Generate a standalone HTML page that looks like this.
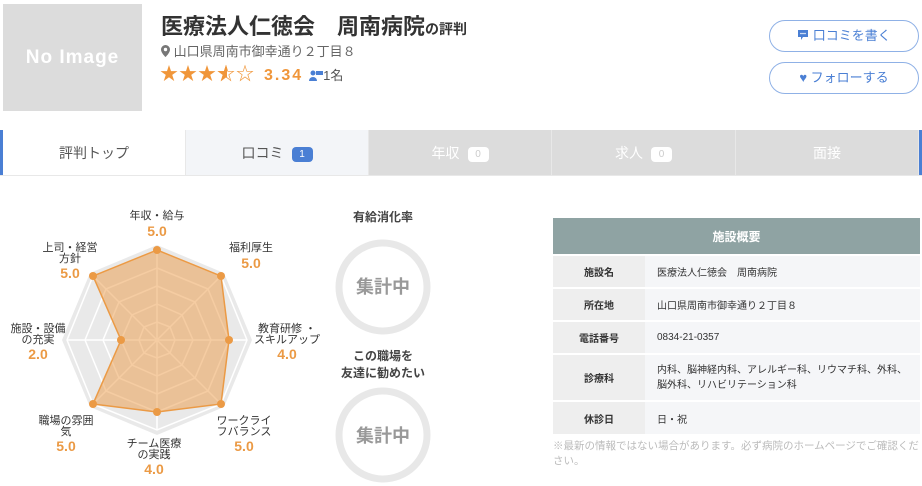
<!DOCTYPE html>
<html><head><meta charset="utf-8"><style>
*{margin:0;padding:0;box-sizing:border-box}
body{width:922px;height:486px;overflow:hidden;background:#fff;font-family:"Liberation Sans","Noto Sans CJK JP",sans-serif;color:#333;position:relative}
.a{position:absolute}
.noimg{left:3px;top:4px;width:139px;height:107px;background:#dcdcdc;color:#fff;font-size:19px;font-weight:bold;text-align:center;line-height:107px;letter-spacing:1px}
h1{position:absolute;left:161px;top:9px;font-size:22px;font-weight:bold;color:#333;white-space:nowrap}
h1 small{font-size:14px}
.btn{left:769px;width:150px;height:32px;border:1px solid #8fb1e6;border-radius:16px;color:#4a7fd4;font-size:13px;text-align:center;line-height:30px}
.tab{top:130px;height:46px;line-height:46px;text-align:center;font-size:14px;color:#fff;background:#dcdcdc;border-right:1px solid #e8e8e8}
.badge{display:inline-block;background:#fff;color:#ccc;border-radius:4px;font-size:10px;width:21px;height:15px;line-height:15px;margin-left:8px;vertical-align:1px}
.lbl{font-size:11px;color:#333;text-align:center;line-height:11px}
.val{font-size:14px;font-weight:bold;color:#eb9a45;text-align:center}
table{position:absolute;left:553px;top:218px;width:367px;border-collapse:collapse;font-size:10px}
th{background:#8fa3a3;color:#fff;height:37px;font-size:12px}
td{border-top:2px solid #fff;padding:0 12px;background:#f5f6f8}
td.k{background:#eeeeee;width:92px;text-align:center;font-weight:bold;padding:0}
</style></head><body>
<div class="a noimg">No Image</div>
<h1>医療法人仁徳会　周南病院<small>の評判</small></h1>
<div class="a" style="left:161px;top:41px;font-size:13px;color:#666"><svg width="9" height="12" viewBox="0 0 9 12" style="vertical-align:-1px"><path d="M4.5 0A4.5 4.5 0 0 0 0 4.5C0 8 4.5 12 4.5 12S9 8 9 4.5A4.5 4.5 0 0 0 4.5 0z" fill="#777"/><circle cx="4.5" cy="4.5" r="1.7" fill="#fff"/></svg> 山口県周南市御幸通り２丁目８</div>
<div class="a" style="left:160px;top:60px;font-size:18px;color:#f0963a;letter-spacing:1px;white-space:nowrap">★★★<span style="position:relative;display:inline-block"><span style="position:absolute;left:0;top:0;width:50%;overflow:hidden">★</span>☆</span>☆ <b style="font-size:16px;letter-spacing:2px;margin-left:3px">3.34</b> <span style="font-size:13px;color:#555;letter-spacing:0"><svg width="14" height="11" viewBox="0 0 14 11" style="vertical-align:-1px"><circle cx="4" cy="3" r="2.5" fill="#4a7fd4"/><path d="M0 11a4 4 0 0 1 8 0z" fill="#4a7fd4"/><rect x="7" y="1" width="7" height="4" fill="#4a7fd4"/></svg>1名</span></div>
<div class="a btn" style="top:20px"><svg width="12" height="12" viewBox="0 0 12 12" style="vertical-align:-1px"><path d="M1 1h10v7H6l-2 3V8H1z" fill="#4a7fd4"/><g fill="#fff"><circle cx="4" cy="4.5" r=".8"/><circle cx="6" cy="4.5" r=".8"/><circle cx="8" cy="4.5" r=".8"/></g></svg> 口コミを書く</div>
<div class="a btn" style="top:62px"><span style="color:#4a7fd4">♥</span> フォローする</div>

<div class="a" style="left:0;top:130px;width:922px;height:1px;background:#e8e8e8"></div>
<div class="a tab" style="left:0;width:186px;background:#fff;color:#555;border-left:3px solid #4a7fd4;border-right:1px solid #e8e8e8">評判トップ</div>
<div class="a tab" style="left:186px;width:183px;background:#f3f5f8;color:#555">口コミ<span class="badge" style="background:#4a7fd4;color:#fff">1</span></div>
<div class="a tab" style="left:369px;width:183px">年収<span class="badge">0</span></div>
<div class="a tab" style="left:552px;width:184px">求人<span class="badge">0</span></div>
<div class="a tab" style="left:736px;width:183px">面接</div>
<div class="a" style="left:919px;top:130px;width:3px;height:46px;background:#4a7fd4"></div>
<div class="a" style="left:0;top:175px;width:922px;height:1px;background:#e8e8e8"></div>

<svg class="a" style="left:0;top:0" width="540" height="486">
<g transform="translate(157,340)">
<polygon points="0,-95 67,-67 95,0 67,67 0,95 -67,67 -95,0 -67,-67" fill="#e9e9e9"/>
<g fill="none" stroke="#fff" stroke-width="1.5">
<polygon points="0,-90 64,-64 90,0 64,64 0,90 -64,64 -90,0 -64,-64"/>
<polygon points="0,-72 51,-51 72,0 51,51 0,72 -51,51 -72,0 -51,-51"/>
<polygon points="0,-54 38,-38 54,0 38,38 0,54 -38,38 -54,0 -38,-38"/>
<polygon points="0,-36 25,-25 36,0 25,25 0,36 -25,25 -36,0 -25,-25"/>
<polygon points="0,-18 13,-13 18,0 13,13 0,18 -13,13 -18,0 -13,-13"/>
<path d="M0-90V90M-90 0H90M-64-64L64 64M64-64L-64 64"/>
</g>
<polygon points="0,-90 64,-64 72,0 64,64 0,72 -64,64 -36,0 -64,-64" fill="rgba(235,154,69,0.5)" stroke="#eb9a45" stroke-width="1.5"/>
<g fill="#eb9a45"><circle cx="0" cy="-90" r="4"/><circle cx="64" cy="-64" r="4"/><circle cx="72" cy="0" r="4"/><circle cx="64" cy="64" r="4"/><circle cx="0" cy="72" r="4"/><circle cx="-64" cy="64" r="4"/><circle cx="-36" cy="0" r="4"/><circle cx="-64" cy="-64" r="4"/></g>
</g>
<circle cx="383" cy="287" r="44" fill="none" stroke="#e8e8e8" stroke-width="7"/>
<circle cx="383" cy="435" r="44" fill="none" stroke="#e8e8e8" stroke-width="7"/>
</svg>
<div class="a lbl" style="left:117px;top:211px;width:80px">年収・給与</div>
<div class="a val" style="left:117px;top:223px;width:80px">5.0</div>
<div class="a lbl" style="left:211px;top:243px;width:80px">福利厚生</div>
<div class="a val" style="left:211px;top:255px;width:80px">5.0</div>
<div class="a lbl" style="left:30px;top:243px;width:80px">上司・経営<br>方針</div>
<div class="a val" style="left:30px;top:265px;width:80px">5.0</div>
<div class="a lbl" style="left:0;top:324px;width:76px">施設・設備<br>の充実</div>
<div class="a val" style="left:0;top:346px;width:76px">2.0</div>
<div class="a lbl" style="left:246px;top:324px;width:82px">教育研修 ・<br>スキルアップ</div>
<div class="a val" style="left:246px;top:346px;width:82px">4.0</div>
<div class="a lbl" style="left:26px;top:416px;width:80px">職場の雰囲<br>気</div>
<div class="a val" style="left:26px;top:438px;width:80px">5.0</div>
<div class="a lbl" style="left:204px;top:416px;width:80px">ワークライ<br>フバランス</div>
<div class="a val" style="left:204px;top:438px;width:80px">5.0</div>
<div class="a lbl" style="left:114px;top:439px;width:80px">チーム医療<br>の実践</div>
<div class="a val" style="left:114px;top:461px;width:80px">4.0</div>

<div class="a" style="left:323px;top:208px;width:120px;text-align:center;font-size:12px;font-weight:bold;color:#444">有給消化率</div>
<div class="a" style="left:323px;top:273px;width:120px;text-align:center;font-size:18px;font-weight:bold;color:#999">集計中</div>
<div class="a" style="left:323px;top:348px;width:120px;text-align:center;font-size:12px;font-weight:bold;color:#444;line-height:17px">この職場を<br>友達に勧めたい</div>
<div class="a" style="left:323px;top:422px;width:120px;text-align:center;font-size:18px;font-weight:bold;color:#999">集計中</div>

<table>
<tr><th colspan="2">施設概要</th></tr>
<tr style="height:33px"><td class="k">施設名</td><td>医療法人仁徳会　周南病院</td></tr>
<tr style="height:33px"><td class="k">所在地</td><td>山口県周南市御幸通り２丁目８</td></tr>
<tr style="height:33px"><td class="k">電話番号</td><td>0834-21-0357</td></tr>
<tr style="height:47px"><td class="k">診療科</td><td style="line-height:15px">内科、脳神経内科、アレルギー科、リウマチ科、外科、脳外科、リハビリテーション科</td></tr>
<tr style="height:33px"><td class="k">休診日</td><td>日・祝</td></tr>
</table>
<div class="a" style="left:553px;top:439px;width:367px;font-size:10.5px;color:#bbb;line-height:15px">※最新の情報ではない場合があります。必ず病院のホームページでご確認ください。</div>
</body></html>
